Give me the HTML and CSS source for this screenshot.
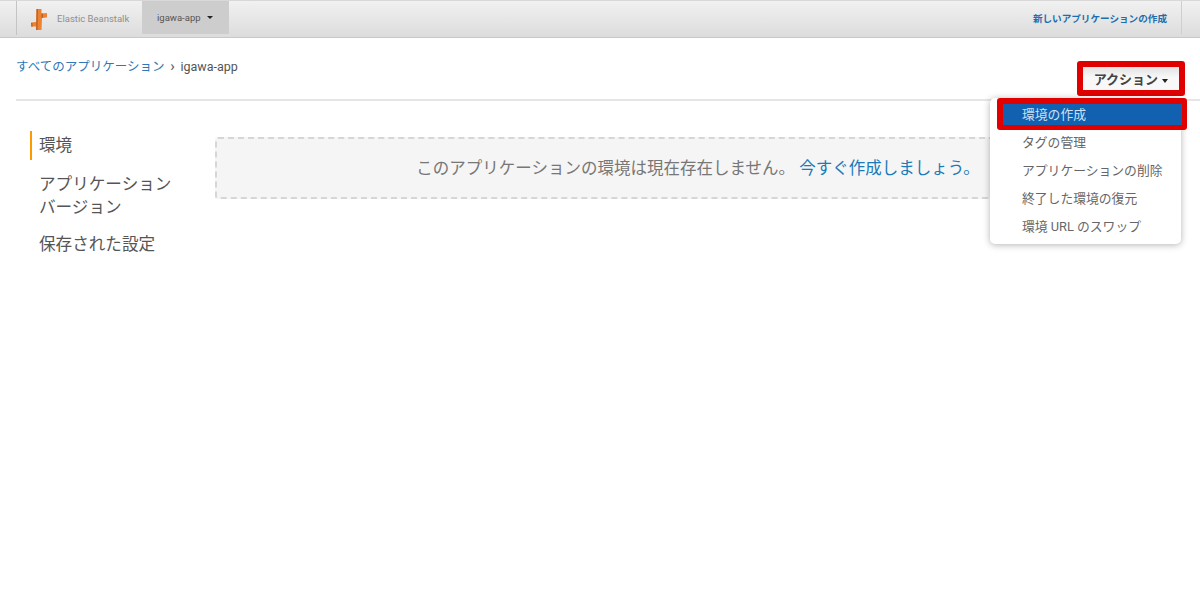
FILE: index.html
```html
<!DOCTYPE html>
<html lang="ja">
<head>
<meta charset="utf-8">
<title>Elastic Beanstalk</title>
<link rel="stylesheet" href="styles.css">
</head>
<body>
<header class="topbar">
  <div class="topbar-left">
    <a class="brand">
      <svg class="logo" width="16" height="21" viewBox="0 0 16 21"><path fill="#ef8132" d="M5.500 0h5v4.500l5.500-.5v4.500l-5 .5-.5 12h-5l.5-3.500H0.500l-.5-4 5.500-.5z"/><path fill="#bb6423" d="M5.500 0h1.500l-.5 21h-1.500zM0 14h1.500v4H.5zM10.500 4.500h1.500v4.300l-1.500.2z"/></svg>
      <span>Elastic Beanstalk</span>
    </a>
    <a class="app-tab">igawa-app <i class="caret"></i></a>
  </div>
  <a class="topbar-link">新しいアプリケーションの作成</a>
</header>
<main class="page">
  <div class="head-row">
    <div class="crumbs"><a>すべてのアプリケーション</a><span class="sep">›</span><span>igawa-app</span></div>
    <div class="actions">
      <button class="action-btn">アクション <i class="caret dark"></i></button>
      <ul class="menu">
        <li class="active">環境の作成</li>
        <li>タグの管理</li>
        <li>アプリケーションの削除</li>
        <li>終了した環境の復元</li>
        <li>環境 URL のスワップ</li>
      </ul>
    </div>
  </div>
  <div class="content">
    <nav class="side">
      <a class="current">環境</a>
      <a>アプリケーション<br>バージョン</a>
      <a>保存された設定</a>
    </nav>
    <div class="notice">このアプリケーションの環境は現在存在しません。 <a>今すぐ作成しましょう。</a></div>
  </div>
</main>
</body>
</html>
```
FILE: styles.css
```css
* { box-sizing: border-box; }
html, body { margin: 0; padding: 0; background: #fff; }
body { font-family: Roboto, "Noto Sans CJK JP", sans-serif; color: #555; overflow: hidden; }
ul { list-style: none; margin: 0; padding: 0; }

.topbar { height: 38px; display: flex; justify-content: space-between; padding: 0 18px 0 16px; background: linear-gradient(#f1f1f1, #dcdcdc); border-top: 1px solid #d8d8d8; border-bottom: 1px solid #c8c8c8; }
.topbar-left { display: flex; height: 34px; border-left: 1px solid #c4c4c4; }
.brand { display: flex; align-items: center; width: 125px; padding-left: 14px; font-size: 9.5px; color: #8f8f8f; }
.logo { margin-right: 10px; margin-top: 3px; }
.app-tab { display: flex; align-items: center; width: 87px; height: 33px; padding-left: 15px; background: #cdcdcd; font-size: 9.5px; color: #555; }
.caret { display: inline-block; margin-left: 6px; border-left: 3px solid transparent; border-right: 3px solid transparent; border-top: 3px solid #222; }
.topbar-link { display: flex; align-items: center; height: 33px; padding-right: 14px; border-right: 1px solid #cfcfcf; font-size: 9.6px; font-weight: 700; color: #1b6fb0; }

.page { padding: 0 15px 0 16px; }
.head-row { position: relative; display: flex; justify-content: space-between; height: 63px; border-bottom: 2px solid #e6e6e6; margin-right: -15px; }
.crumbs { padding-top: 20px; font-size: 12.5px; line-height: 17px; color: #555; }
.crumbs a { color: #2e78b8; }
.sep { display: inline-block; width: 16px; text-align: center; font-size: 15px; line-height: 15px; }

.actions { position: absolute; top: 23px; right: 15px; width: 108px; height: 35px; z-index: 2; }
.action-btn { width: 100%; height: 100%; border: 6px solid #e00000; border-radius: 3px; background: linear-gradient(#e2e2e2, #f8f8f8 45%); font: 700 13px Roboto, "Noto Sans CJK JP", sans-serif; color: #444; padding: 0; }
.action-btn .caret { margin-left: 1px; vertical-align: middle; border-width: 4px 3.5px 0; }
.menu { position: absolute; top: 37px; right: 4px; width: 191px; height: 146px; padding: 2px 0; background: #fff; border-radius: 5px; box-shadow: 0 1px 7px rgba(0,0,0,.3); font-size: 12.8px; }
.menu li { height: 28px; line-height: 28px; padding-left: 32px; color: #666; }
.menu .active { position: relative; left: 7px; width: 190px; height: 32px; margin: -2px 0 -1px; padding-left: 19px; line-height: 21px; background: #1261b0; color: #cfe0f0; border: 5px solid #e00000; border-top-width: 6px; border-left-width: 6px; border-radius: 3px; }

.content { display: flex; align-items: flex-start; padding-top: 30px; }
.side { width: 199px; padding-left: 14px; display: flex; flex-direction: column; }
.side a { font-size: 16.6px; line-height: 23px; color: #555; padding: 3px 0 3px 7px; margin-bottom: 8px; width: 150px; border-left: 2px solid transparent; }
.side .current { border-left-color: #f90; height: 29px; margin-bottom: 10px; }
.notice { margin-top: 6px; width: 966px; height: 62px; line-height: 59px; background: #f5f5f5; border: 2px dashed #d6d6d6; border-radius: 3px; font-size: 16.5px; color: #777; text-align: center; }
.notice a { color: #1b7ab8; }
```
